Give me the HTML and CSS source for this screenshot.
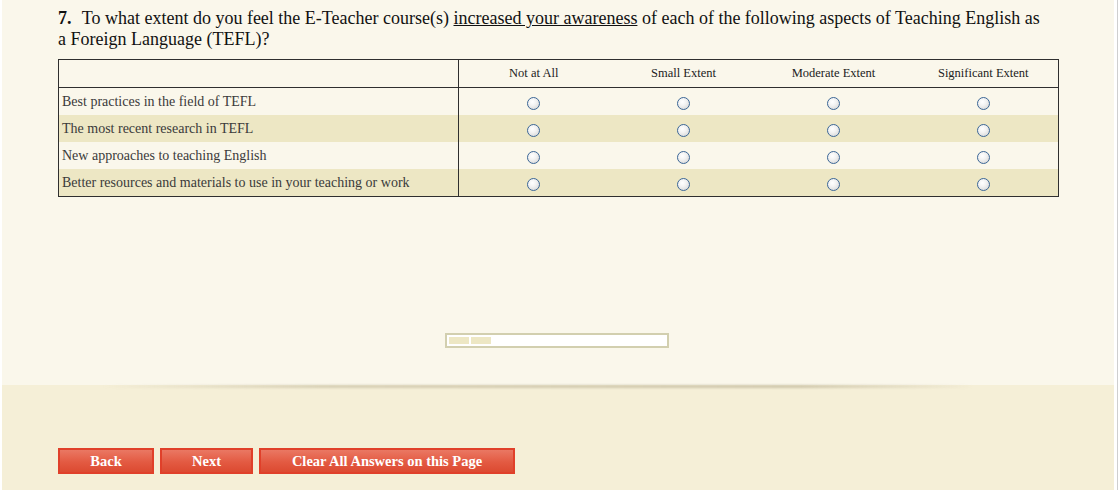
FILE: index.html
```html
<!DOCTYPE html>
<html>
<head>
<meta charset="utf-8">
<link rel="stylesheet" href="styles.css">
</head>
<body>
<div class="page">
  <div class="panel">
    <div class="question"><b class="num">7.</b> To what extent do you feel the E-Teacher course(s) <u>increased your awareness</u> of each of the following aspects of Teaching English as a Foreign Language (TEFL)?</div>
    <table class="grid">
      <colgroup><col class="c-label"><col class="c-opt"><col class="c-opt"><col class="c-opt"><col class="c-opt"></colgroup>
      <thead>
        <tr><th class="lab"></th><th>Not at All</th><th>Small Extent</th><th>Moderate Extent</th><th>Significant Extent</th></tr>
      </thead>
      <tbody>
        <tr><td class="lab">Best practices in the field of TEFL</td><td><input type="radio" name="r1"></td><td><input type="radio" name="r1"></td><td><input type="radio" name="r1"></td><td><input type="radio" name="r1"></td></tr>
        <tr class="alt"><td class="lab">The most recent research in TEFL</td><td><input type="radio" name="r2"></td><td><input type="radio" name="r2"></td><td><input type="radio" name="r2"></td><td><input type="radio" name="r2"></td></tr>
        <tr><td class="lab">New approaches to teaching English</td><td><input type="radio" name="r3"></td><td><input type="radio" name="r3"></td><td><input type="radio" name="r3"></td><td><input type="radio" name="r3"></td></tr>
        <tr class="alt"><td class="lab">Better resources and materials to use in your teaching or work</td><td><input type="radio" name="r4"></td><td><input type="radio" name="r4"></td><td><input type="radio" name="r4"></td><td><input type="radio" name="r4"></td></tr>
      </tbody>
    </table>
    <div class="progress"><span class="seg"></span><span class="seg"></span></div>
  </div>
  <div class="footer">
    <button class="btn back">Back</button>
    <button class="btn next">Next</button>
    <button class="btn clear">Clear All Answers on this Page</button>
  </div>
</div>
</body>
</html>
```

FILE: styles.css
```css
html {
  background: linear-gradient(to right, #ffffff 1117px, #cfcfcf 1117px);
  height: 100%;
}
body {
  margin: 0;
  font-family: "Liberation Serif", "Times New Roman", serif;
}
.page {
  width: 1112px;
  margin-left: 2px;
  height: 490px;
  display: flex;
  flex-direction: column;
}
.panel {
  height: 385px;
  background: #faf7eb;
  padding: 8px 0 0 56px;
  box-sizing: border-box;
  display: flex;
  flex-direction: column;
  position: relative;
}
.panel::after {
  content: "";
  position: absolute;
  left: 100px;
  right: 140px;
  bottom: -3px;
  height: 3px;
  background: linear-gradient(to right, rgba(170,160,130,0) 0%, rgba(170,160,130,0.4) 25%, rgba(170,160,130,0.5) 80%, rgba(170,160,130,0) 100%);
  filter: blur(0.8px);
}
.question {
  width: 994px;
  font-size: 18px;
  line-height: 21px;
  color: #111;
}
.question .num {
  font-weight: bold;
  margin-right: 6px;
}
.grid {
  margin-top: 9px;
  width: 1000px;
  border-collapse: collapse;
  border: 1px solid #2f2f2f;
  table-layout: fixed;
}
.c-label { width: 400px; }
.c-opt { width: 150px; }
.grid th {
  height: 27px;
  font-size: 12.5px;
  font-weight: normal;
  color: #222;
  text-align: center;
  padding: 0;
  border-bottom: 1px solid #2f2f2f;
}
.grid td {
  height: 27px;
  padding: 0;
  text-align: center;
  vertical-align: middle;
}
.grid .lab {
  border-right: 1px solid #2f2f2f;
  text-align: left;
  padding-left: 3px;
  font-size: 14px;
  color: #3a3a3a;
}
.grid tr.alt td { background: #ede7c4; }
.grid input[type=radio] {
  appearance: none;
  -webkit-appearance: none;
  width: 13px;
  height: 13px;
  margin: 2px 0 0 0;
  border: 1px solid #3c6796;
  border-radius: 50%;
  background: radial-gradient(circle at 40% 35%, #ffffff 0%, #f2f2f2 40%, #cfcfcf 100%);
  vertical-align: middle;
}
.progress {
  align-self: center;
  margin: 136px 0 0 -58px;
  width: 224px;
  height: 15px;
  box-sizing: border-box;
  border: 2px solid #d2cfaf;
  background: #ffffff;
  display: flex;
  gap: 2px;
  padding: 2px;
}
.seg {
  width: 20px;
  height: 7px;
  background: #ede7c4;
}
.footer {
  flex: 1;
  background: #f5efd7;
  padding: 63px 0 0 56px;
  display: flex;
  align-items: flex-start;
  gap: 6px;
}
.btn {
  height: 26px;
  border: 2px solid #e0402a;
  background: linear-gradient(to bottom, #ea7863 0%, #e35a42 55%, #dc4a31 100%);
  color: #ffffff;
  font-family: "Liberation Serif", "Times New Roman", serif;
  font-weight: bold;
  font-size: 14.5px;
  padding: 0;
  margin: 0;
}
.back { width: 96px; }
.next { width: 93px; }
.clear { width: 256px; }
```
